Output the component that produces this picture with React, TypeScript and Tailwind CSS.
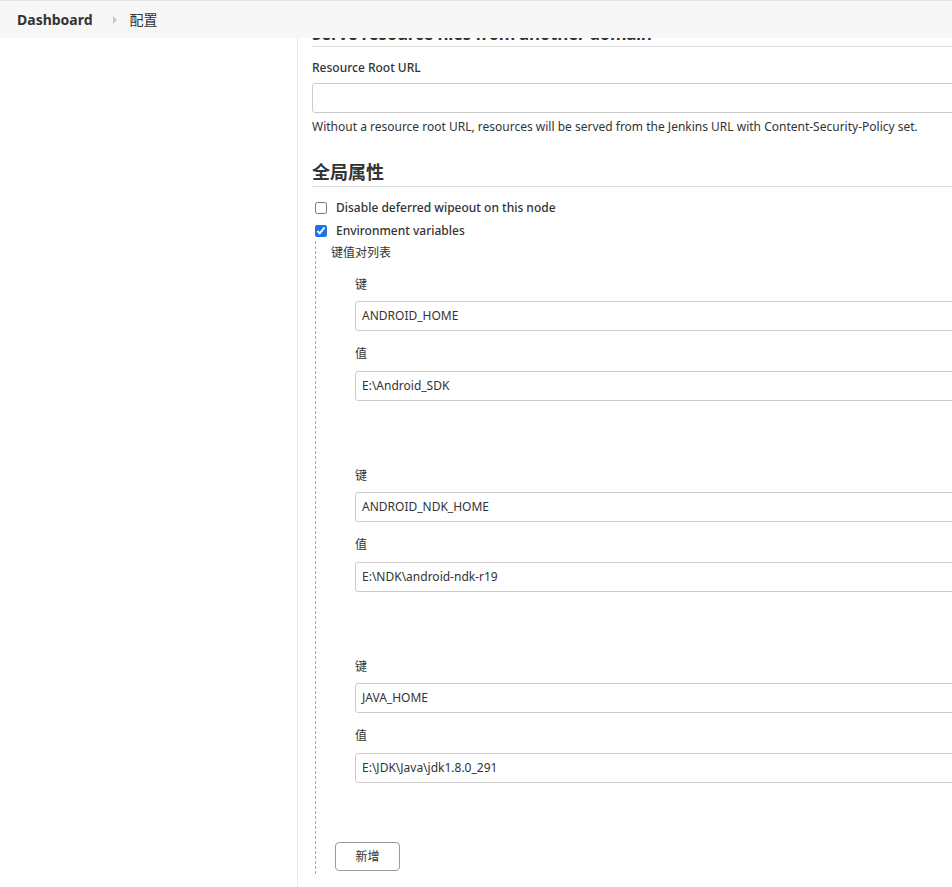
import React from 'react';

const font = { fontFamily: '"Noto Sans", "Noto Sans CJK SC", sans-serif' };

const pairs = [
  { key: 'ANDROID_HOME', value: 'E:\\Android_SDK' },
  { key: 'ANDROID_NDK_HOME', value: 'E:\\NDK\\android-ndk-r19' },
  { key: 'JAVA_HOME', value: 'E:\\JDK\\Java\\jdk1.8.0_291' },
];

function TextInput({ value }: { value?: string }) {
  return (
    <div className="h-[30px] w-[900px] rounded-[3px] border border-[#ccc] bg-white px-[6px] flex items-center text-[12px] text-[#333]">
      {value}
    </div>
  );
}

export default function App() {
  return (
    <div className="h-[887px] w-[952px] overflow-hidden bg-white text-[#333]" style={font}>
      {/* Breadcrumb bar */}
      <header className="relative z-10 h-[38px] bg-[#f7f7f7] border-t border-[#e4e4e4] flex items-center pl-[17px]">
        <span className="text-[14px] font-bold text-[#333]">Dashboard</span>
        <svg width="5" height="8" viewBox="0 0 5 8" className="ml-[20px] mr-[12px]">
          <path d="M0 0 L4 4 L0 8 Z" fill="#c8c8c8" />
        </svg>
        <span className="text-[14px] text-[#333]">配置</span>
      </header>

      <div className="flex h-[849px]">
        {/* Side panel */}
        <aside className="w-[298px] shrink-0 border-r border-[#ececec]" />

        {/* Main config form */}
        <main className="flex-1 overflow-hidden pl-[14px]">
          <div className="w-[900px]">
            <h2 className="-mt-[16px] h-[25px] border-b border-[#ddd] text-[17px] font-bold leading-[24px] tracking-[-0.3px]">
              Serve resource files from another domain
            </h2>

            <div className="mt-[12px] text-[12px] font-medium leading-[18px]">Resource Root URL</div>
            <div className="mt-[6px]">
              <TextInput />
            </div>
            <div className="mt-[5px] text-[12px] leading-[18px]">
              Without a resource root URL, resources will be served from the Jenkins URL with Content-Security-Policy set.
            </div>

            <h2 className="mt-[24px] h-[27px] border-b border-[#ddd] text-[18px] font-bold leading-[24px]">全局属性</h2>

            <label className="mt-[10px] flex h-[21px] items-center text-[12px] font-medium">
              <input type="checkbox" className="ml-[3px] mr-[9px] h-[12px] w-[12px]" />
              Disable deferred wipeout on this node
            </label>
            <label className="mt-[2px] flex h-[21px] items-center text-[12px] font-medium">
              <input type="checkbox" defaultChecked className="ml-[3px] mr-[9px] h-[12px] w-[12px] accent-[#1a73e8]" />
              Environment variables
            </label>

            <div className="ml-[3px] h-[633px] border-l border-dashed border-[#aaa] pl-[15px] pt-[3px]">
              <div className="text-[12px] leading-[18px]">键值对列表</div>
              <div className="ml-[24px] flex flex-col gap-[66px] pt-[14px]">
                {pairs.map((p) => (
                  <div key={p.key}>
                    <div className="text-[12px] leading-[18px]">键</div>
                    <div className="mt-[7px]">
                      <TextInput value={p.key} />
                    </div>
                    <div className="mt-[14px] text-[12px] leading-[18px]">值</div>
                    <div className="mt-[8px]">
                      <TextInput value={p.value} />
                    </div>
                  </div>
                ))}
              </div>
              <button className="ml-[4px] mt-[59px] h-[29px] w-[65px] rounded-[4px] border border-[#9a9a9a] bg-white text-[12px] text-[#333]">
                新增
              </button>
            </div>
          </div>
        </main>
      </div>
    </div>
  );
}
